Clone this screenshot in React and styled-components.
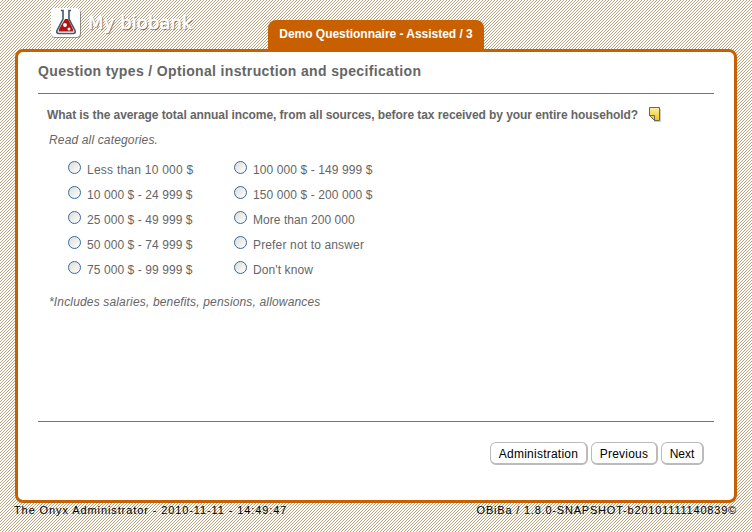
import React from "react";
import styled, { createGlobalStyle } from "styled-components";

const ORANGE = "#c86000";

const GlobalStyle = createGlobalStyle`
  * { box-sizing: border-box; }
  html, body { margin: 0; padding: 0; }
  body {
    width: 752px;
    height: 532px;
    overflow: hidden;
    font-family: "Liberation Sans", Arial, sans-serif;
    background: url("data:image/svg+xml,%3Csvg xmlns='http://www.w3.org/2000/svg' width='3' height='3' shape-rendering='crispEdges'%3E%3Crect width='3' height='3' fill='%23fff'/%3E%3Cpath fill='%23b5a27b' d='M2 0h1v1H2zM1 1h1v1H1zM0 2h1v1H0z'/%3E%3C/svg%3E");
  }
`;

const Page = styled.div`
  display: flex;
  flex-direction: column;
  width: 752px;
  height: 532px;
  padding: 0 15px;
`;

const Header = styled.header`
  display: flex;
  height: 49px;
  padding-left: 35px;
`;

const Logo = styled.svg`
  width: 32px;
  height: 34px;
  margin-top: 7px;
`;

const Brand = styled.h1`
  width: 187px;
  margin: 12px 0 0 6px;
  font: normal 18px/22px "DejaVu Sans", Verdana, sans-serif;
  letter-spacing: 0.1px;
  white-space: nowrap;
  color: #fff;
  -webkit-text-stroke: 0.6px #fff;
  text-shadow: 1px 1px 1px #555;
`;

const Tab = styled.div`
  width: 216px;
  height: 29px;
  margin-top: 20px;
  margin-left: -7px;
  border-radius: 8px 8px 0 0;
  background: ${ORANGE};
  color: #fff;
  font-size: 12px;
  font-weight: bold;
  line-height: 29px;
  text-align: center;
  white-space: nowrap;
`;

const Panel = styled.main`
  display: flex;
  flex-direction: column;
  width: 722px;
  height: 454px;
  padding: 0 20px;
  border: 3px solid ${ORANGE};
  border-radius: 8px;
  background: #fff;
  color: #666;
`;

const Heading = styled.h2`
  height: 42px;
  margin: 0;
  border-bottom: 1px solid ${ORANGE};
  font-size: 14px;
  line-height: 38px;
  letter-spacing: 0.35px;
  white-space: nowrap;
`;

const Body = styled.section`
  height: 328px;
  padding: 11px 0 0 9px;
  border-bottom: 1px solid ${ORANGE};
`;

const Question = styled.div`
  display: flex;
  gap: 10px;
  height: 20px;
  font-size: 12px;
  font-weight: bold;
  line-height: 20px;
  white-space: nowrap;
`;

const Line = styled.span`
  letter-spacing: ${(p) => p.$track || 0}px;
  white-space: nowrap;
`;

const Note = styled.p`
  margin: ${(p) => p.$top}px 0 0 2px;
  font-size: 12px;
  font-style: italic;
  line-height: 20px;
`;

const Choices = styled.div`
  display: grid;
  grid-template-columns: 166px 200px;
  grid-template-rows: repeat(5, 25px);
  grid-auto-flow: column;
  margin: 7px 0 0 21px;
`;

const Choice = styled.label`
  display: flex;
  gap: 6px;
  font-size: 12px;
  line-height: 27px;
`;

const Radio = styled.input`
  appearance: none;
  flex: none;
  width: 13px;
  height: 13px;
  margin: 4px 0 0;
  border: 1px solid #34699a;
  border-radius: 50%;
  background: linear-gradient(135deg, #dcdcd7, #fff);
`;

const Actions = styled.nav`
  display: flex;
  justify-content: flex-end;
  gap: 3px;
  padding: 20px 10px 0 0;
`;

const Button = styled.button`
  width: ${(p) => p.$width}px;
  height: 23px;
  padding: 0;
  border: 1px solid #bbb;
  border-right-width: 2px;
  border-bottom-width: 2px;
  border-radius: 6px;
  background: #fff;
  color: #000;
  font: 12px/22px "Liberation Sans", Arial, sans-serif;
`;

const Footer = styled.footer`
  display: flex;
  justify-content: space-between;
  margin-left: -1px;
  color: #000;
  font-size: 11px;
  line-height: 15px;
`;

const choices = [
  ["Less than 10 000 $", 0.24],
  ["10 000 $ - 24 999 $", 0.08],
  ["25 000 $ - 49 999 $", 0.08],
  ["50 000 $ - 74 999 $", 0.08],
  ["75 000 $ - 99 999 $", 0.08],
  ["100 000 $ - 149 999 $", 0.1],
  ["150 000 $ - 200 000 $", 0.1],
  ["More than 200 000", 0.06],
  ["Prefer not to answer", 0.15],
  ["Don't know", 0.1],
];

const FlaskLogo = () => (
  <Logo viewBox="0 0 32 34">
    <rect x="1.5" y="2.5" width="29.5" height="28.5" rx="4" fill="#555" opacity=".6" />
    <rect x="1" y="1" width="29" height="29" rx="4" fill="#fff" />
    <path d="M15 12 9.5 21l-1 3.5h15l-1-3.5-4.5-9z" fill="#b01313" />
    <path d="M11 3.5h2v8.500L7 23.500q-1 3 2 3h14q3 0 2-3L19 12V3.500h2" fill="none" stroke="#415866" strokeWidth="1.6" />
    <circle cx="15" cy="18" r="1.9" fill="#fff" />
    <circle cx="19" cy="22" r="1.5" fill="#fff" />
  </Logo>
);

const StickyNote = styled.svg`
  width: 13px;
  height: 16px;
  margin-top: 2px;
`;

export default function App() {
  return (
    <>
      <GlobalStyle />
      <Page>
        <Header>
          <FlaskLogo />
          <Brand>My biobank</Brand>
          <Tab><Line $track={-0.03}>Demo Questionnaire - Assisted / 3</Line></Tab>
        </Header>
        <Panel>
          <Heading>Question types / Optional instruction and specification</Heading>
          <Body>
            <Question>
              <Line $track={-0.068}>What is the average total annual income, from all sources, before tax received by your entire household?</Line>
              <StickyNote viewBox="0 0 13 16">
                <defs>
                  <linearGradient id="paper" x1="0" y1="0" x2="0" y2="1">
                    <stop offset="0" stopColor="#faeeb0" />
                    <stop offset="1" stopColor="#f0c800" />
                  </linearGradient>
                </defs>
                <path d="M6 14h6V2h1v13H6z" fill="#ccc" />
                <path d="M1.500.5h10v13h-5l-5-5z" fill="url(#paper)" stroke="#666" />
                <path d="M1.500 8.500h5v5z" fill="#f0d030" stroke="#666" />
              </StickyNote>
            </Question>
            <Note $top={5}><Line $track={0.15}>Read all categories.</Line></Note>
            <Choices>
              {choices.map(([text, track]) => (
                <Choice key={text}><Radio type="radio" name="income" /><Line $track={track}>{text}</Line></Choice>
              ))}
            </Choices>
            <Note $top={10}><Line $track={0.16}>*Includes salaries, benefits, pensions, allowances</Line></Note>
          </Body>
          <Actions>
            <Button $width={98}><Line $track={0.23}>Administration</Line></Button>
            <Button $width={67}><Line $track={0.2}>Previous</Line></Button>
            <Button $width={43}><Line $track={0}>Next</Line></Button>
          </Actions>
        </Panel>
        <Footer>
          <Line $track={0.9}>The Onyx Administrator - 2010-11-11 - 14:49:47</Line>
          <Line $track={0.8}>OBiBa / 1.8.0-SNAPSHOT-b20101111140839©</Line>
        </Footer>
      </Page>
    </>
  );
}
